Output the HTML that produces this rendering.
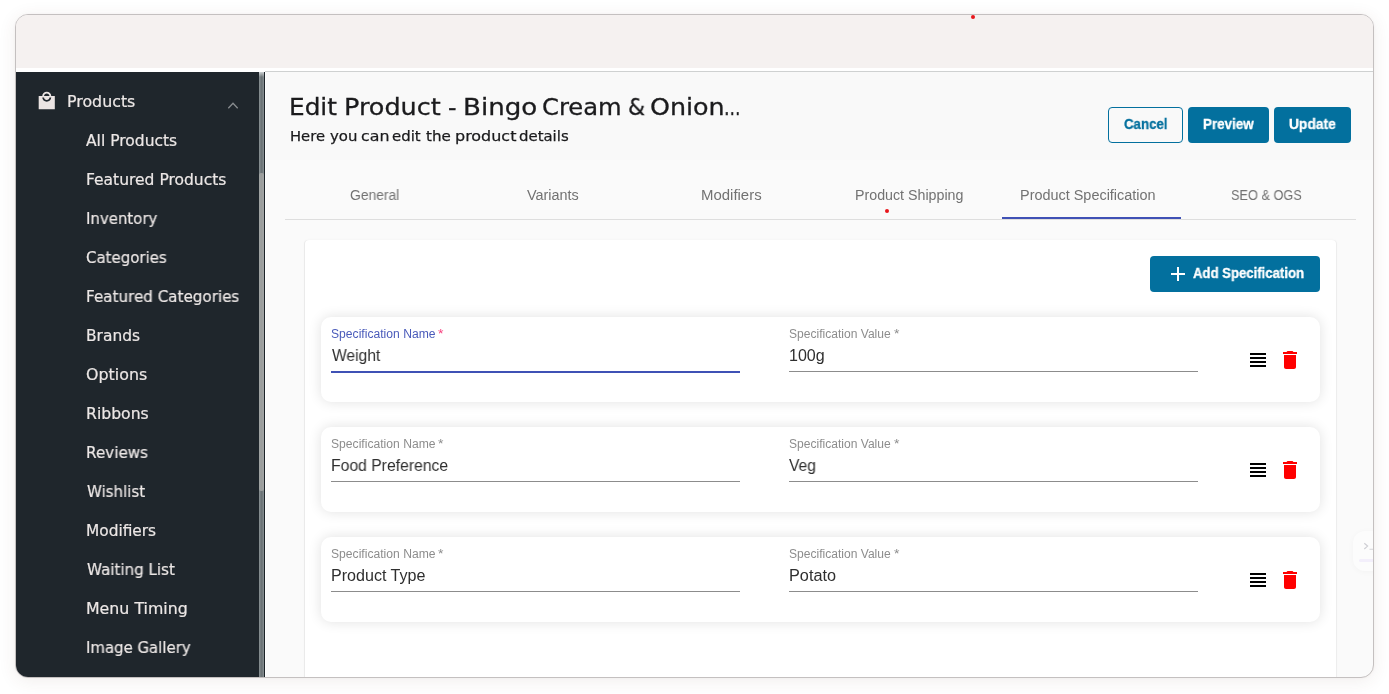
<!DOCTYPE html>
<html lang="en">
<head>
<meta charset="utf-8">
<title>Edit Product - Bingo Cream &amp; Onion</title>
<style>
html,body{margin:0;padding:0;background:#fff;}
body{width:1389px;height:694px;position:relative;overflow:hidden;font-family:"Liberation Sans",sans-serif;}
.frame{position:absolute;left:15px;top:14px;width:1357px;height:662px;border:1px solid #c4c0c0;border-radius:13px;
  box-shadow:0 3px 18px rgba(90,60,50,.085),0 0 3px rgba(90,60,50,.04);overflow:hidden;background:#fafafa;}
/* coordinates inside .inner are page coordinates */
.inner{position:absolute;left:-16px;top:-15px;width:1389px;height:694px;}
.abs{position:absolute;}
.topbar{left:0;top:0;width:1389px;height:68px;background:#f5f1f0;}
.strip{left:0;top:68px;width:1389px;height:4px;background:#fff;}
.mainline{left:265px;top:71px;width:1124px;height:1px;background:#cfd1d1;}
.side{left:0;top:72px;width:259px;height:622px;background:#1f262c;}
.sbtrack{left:259px;top:72px;width:5px;height:622px;background:linear-gradient(90deg,#8a9295 0,#6c7477 45%,#6c7477 60%,#8a9295 100%);}
.sbthumb{left:259px;top:173px;width:5px;height:318px;background:linear-gradient(90deg,#9fa3a3 0,#9b9d9c 50%,#a3a6a6 100%);border-radius:2px 2px 2px 2px;}
.sbedge{left:264px;top:72px;width:1px;height:622px;background:#1c2328;}
.mainedge{left:265px;top:72px;width:1px;height:622px;background:#fff;}
.mont{font-family:"DejaVu Sans","Liberation Sans",sans-serif;}
.nav{-webkit-text-stroke:.2px #ece7e6;color:#ece7e6;font-size:15px;line-height:20px;white-space:nowrap;letter-spacing:.05px;}
.title{left:290px;top:92px;font-size:23px;line-height:30px;color:#1d1d1f;letter-spacing:.5px;-webkit-text-stroke:.3px #1d1d1f;white-space:nowrap;}
.subtitle{left:290px;top:126px;font-size:14px;line-height:20px;color:#1d1d1f;white-space:nowrap;letter-spacing:.58px;-webkit-text-stroke:.2px #1d1d1f;}
.btn{box-sizing:border-box;height:36px;top:107px;border-radius:4px;font-weight:700;font-size:14px;line-height:36px;text-align:center;letter-spacing:-.45px;white-space:nowrap;}
.btn.fill{background:#03709e;color:#fff;}
.btn.line{background:transparent;border:1px solid #03709e;color:#03709e;line-height:34px;}
.tab{top:171px;width:178.5px;height:48px;line-height:48px;text-align:center;font-size:14px;color:#6b6b6b;white-space:nowrap;letter-spacing:.12px;}
.tabline{left:285px;top:219px;width:1071px;height:1px;background:#dedede;}
.ink{left:1002px;top:217px;width:179px;height:2px;background:#3f51b5;}
.card{left:305px;top:240px;width:1031px;height:460px;background:#fff;border-radius:4px 4px 0 0;box-shadow:-1px 0 0 rgba(0,0,0,.05),1px 0 0 rgba(0,0,0,.04),0 0 3px rgba(0,0,0,.04);}
.row{left:321px;width:999px;height:85px;background:#fff;border-radius:10px;box-shadow:0 0 13px rgba(0,0,0,.12);}
.lbl{font-size:12px;line-height:14px;color:#8a8a8a;white-space:nowrap;}
.lbl.act{color:#3f51b5;}
.lbl .req{color:#f4437c;}
.val{font-size:16px;line-height:20px;color:#333;white-space:nowrap;letter-spacing:-.1px;}
.ul{height:1px;background:#8c8c8c;width:409px;}
.ul.act{height:2px;background:#3f51b5;}
.dot{width:4px;height:4px;border-radius:50%;background:#e8161b;}
svg{display:block;}
h1,p,nav,section{margin:0;padding:0;font:inherit;display:block;}
.dj{font-family:"DejaVu Sans","Liberation Sans",sans-serif;}
.lb{font-family:"Liberation Sans",sans-serif;}
.t{display:block;position:absolute;white-space:nowrap;line-height:20px;transform-origin:0 50%;will-change:transform;}
</style>
</head>
<body>
<div class="frame"><div class="inner">
  <div class="abs topbar"></div>
  <div class="abs strip"></div>
  <div class="abs mainline"></div>

  <div class="abs" style="left:265px;top:72px;width:1124px;height:88px;background:#f9f9f9"></div>
  <!-- sidebar -->
  <div class="abs side"></div>
  <div class="abs sbtrack"></div>
  <div class="abs" style="left:259px;top:72px;width:5px;height:5px;background:linear-gradient(180deg,rgba(215,219,220,.9),rgba(215,219,220,0))"></div>
  <div class="abs sbthumb"></div>
  <div class="abs sbedge"></div>
  <div class="abs mainedge"></div>

  <svg class="abs" style="left:36.300px;top:91.350px" width="21.500" height="19.800" viewBox="0 0 24 24" preserveAspectRatio="none"><path fill="#ebe4e3" fill-rule="evenodd" d="M3.300 6H7c0-2.760 2.240-5 5-5s5 2.240 5 5h3.700c.200 0 .300.100.300.300V21.700c0 .200-.100.300-.300.300H3.300c-.200 0-.300-.100-.300-.300V6.300c0-.200.100-.300.300-.300zM12 3c1.660 0 3 1.340 3 3H9c0-1.660 1.340-3 3-3zm0 10c-2.760 0-5-2.240-5-5h2c0 1.660 1.340 3 3 3s3-1.340 3-3h2c0 2.760-2.240 5-5 5z"/></svg>
  <svg class="abs" style="left:226px;top:100px" width="14" height="10" viewBox="0 0 14 10"><path d="M2.300 8.300 L7 3.300 L11.700 8.300" fill="none" stroke="#878b8e" stroke-width="1.300"/></svg>


  <!-- header -->
  <div class="abs btn line" style="left:1108px;width:75px"></div>
  <div class="abs btn fill" style="left:1188px;width:81px"></div>
  <div class="abs btn fill" style="left:1274px;width:77px"></div>

  <!-- tabs -->
  <div class="abs tabline"></div>
  <div class="abs ink"></div>

  <!-- card -->
  <div class="abs card"></div>
  <div class="abs btn fill" style="left:1150px;top:256px;width:170px;"></div>

  <!-- row 1 -->
  <div class="abs row" style="top:317px"></div>
  <div class="abs ul act" style="left:331px;top:371px"></div>
  <div class="abs ul" style="left:789px;top:371px"></div>
  <svg class="abs" style="left:1246px;top:348px" width="24" height="24" viewBox="0 0 24 24"><path fill="#000" d="M4 15h16v-2H4v2zm0 4h16v-2H4v2zm0-8h16V9H4v2zm0-6v2h16V5H4z"/></svg>
  <svg class="abs" style="left:1278px;top:348px" width="24" height="24" viewBox="0 0 24 24"><path fill="#ff0000" d="M6 19c0 1.100.900 2 2 2h8c1.100 0 2-.900 2-2V7H6v12zM19 4h-3.500l-1-1h-5l-1 1H5v2h14V4z"/></svg>

  <!-- row 2 -->
  <div class="abs row" style="top:427px"></div>
  <div class="abs ul" style="left:331px;top:481px"></div>
  <div class="abs ul" style="left:789px;top:481px"></div>
  <svg class="abs" style="left:1246px;top:458px" width="24" height="24" viewBox="0 0 24 24"><path fill="#000" d="M4 15h16v-2H4v2zm0 4h16v-2H4v2zm0-8h16V9H4v2zm0-6v2h16V5H4z"/></svg>
  <svg class="abs" style="left:1278px;top:458px" width="24" height="24" viewBox="0 0 24 24"><path fill="#ff0000" d="M6 19c0 1.100.900 2 2 2h8c1.100 0 2-.900 2-2V7H6v12zM19 4h-3.500l-1-1h-5l-1 1H5v2h14V4z"/></svg>

  <!-- row 3 -->
  <div class="abs row" style="top:537px"></div>
  <div class="abs ul" style="left:331px;top:591px"></div>
  <div class="abs ul" style="left:789px;top:591px"></div>
  <svg class="abs" style="left:1246px;top:568px" width="24" height="24" viewBox="0 0 24 24"><path fill="#000" d="M4 15h16v-2H4v2zm0 4h16v-2H4v2zm0-8h16V9H4v2zm0-6v2h16V5H4z"/></svg>
  <svg class="abs" style="left:1278px;top:568px" width="24" height="24" viewBox="0 0 24 24"><path fill="#ff0000" d="M6 19c0 1.100.900 2 2 2h8c1.100 0 2-.900 2-2V7H6v12zM19 4h-3.500l-1-1h-5l-1 1H5v2h14V4z"/></svg>

  <svg class="abs" style="left:1166px;top:262px" width="24" height="24" viewBox="0 0 24 24"><path fill="#fff" d="M19 13h-6v6h-2v-6H5v-2h6V5h2v6h6v2z"/></svg>
  <div class="abs" style="left:1353px;top:531px;width:30px;height:40px;background:#fcfcfc;border-radius:12px 0 0 12px;box-shadow:0 1px 6px rgba(0,0,0,.03)"></div>
  <svg class="abs" style="left:1362px;top:540px" width="12" height="12" viewBox="0 0 12 12"><path d="M2.300 3.200 L5.600 6.100 L2.300 9" fill="none" stroke="#cfcfd4" stroke-width="1.200"/><path d="M7.500 9.200 H12" fill="none" stroke="#d4d4d8" stroke-width="1.100"/></svg>
  <div class="abs" style="left:1359px;top:559px;width:15px;height:3px;background:#f3effb;border-radius:2px 0 0 2px"></div>
  <nav>
    <span class="t dj" style="left:67.28px;top:92.20px;font-size:15.5px;color:#ece7e6;transform:scaleX(1.0215);-webkit-text-stroke:.2px #ece7e6">Products</span>
    <span class="t dj" style="left:86.10px;top:131.45px;font-size:15.3px;color:#ece7e6;transform:scaleX(1.0146);-webkit-text-stroke:.2px #ece7e6">All Products</span>
    <span class="t dj" style="left:85.79px;top:170.45px;font-size:15.3px;color:#ece7e6;transform:scaleX(1.0139);-webkit-text-stroke:.2px #ece7e6">Featured Products</span>
    <span class="t dj" style="left:85.82px;top:209.45px;font-size:15.3px;color:#ece7e6;transform:scaleX(0.9764);-webkit-text-stroke:.2px #ece7e6">Inventory</span>
    <span class="t dj" style="left:85.82px;top:248.45px;font-size:15.3px;color:#ece7e6;transform:scaleX(0.9790);-webkit-text-stroke:.2px #ece7e6">Categories</span>
    <span class="t dj" style="left:85.81px;top:287.45px;font-size:15.3px;color:#ece7e6;transform:scaleX(0.9902);-webkit-text-stroke:.2px #ece7e6">Featured Categories</span>
    <span class="t dj" style="left:85.79px;top:326.45px;font-size:15.3px;color:#ece7e6;transform:scaleX(1.0096);-webkit-text-stroke:.2px #ece7e6">Brands</span>
    <span class="t dj" style="left:85.76px;top:365.45px;font-size:15.3px;color:#ece7e6;transform:scaleX(1.0368);-webkit-text-stroke:.2px #ece7e6">Options</span>
    <span class="t dj" style="left:85.78px;top:404.45px;font-size:15.3px;color:#ece7e6;transform:scaleX(1.0233);-webkit-text-stroke:.2px #ece7e6">Ribbons</span>
    <span class="t dj" style="left:85.81px;top:443.45px;font-size:15.3px;color:#ece7e6;transform:scaleX(0.9918);-webkit-text-stroke:.2px #ece7e6">Reviews</span>
    <span class="t dj" style="left:86.80px;top:482.45px;font-size:15.3px;color:#ece7e6;transform:scaleX(0.9814);-webkit-text-stroke:.2px #ece7e6">Wishlist</span>
    <span class="t dj" style="left:85.80px;top:521.45px;font-size:15.3px;color:#ece7e6;transform:scaleX(1.0044);-webkit-text-stroke:.2px #ece7e6">Modifiers</span>
    <span class="t dj" style="left:86.80px;top:560.45px;font-size:15.3px;color:#ece7e6;transform:scaleX(0.9876);-webkit-text-stroke:.2px #ece7e6">Waiting List</span>
    <span class="t dj" style="left:85.77px;top:599.45px;font-size:15.3px;color:#ece7e6;transform:scaleX(1.0323);-webkit-text-stroke:.2px #ece7e6">Menu Timing</span>
    <span class="t dj" style="left:85.82px;top:638.45px;font-size:15.3px;color:#ece7e6;transform:scaleX(0.9755);-webkit-text-stroke:.2px #ece7e6">Image Gallery</span>
  </nav>
  <h1>
    <span class="t dj" style="left:289.45px;top:97.00px;font-size:23px;color:#1b1b1d;transform:scaleX(1.0762);-webkit-text-stroke:.3px #1b1b1d">Edit</span>
    <span class="t dj" style="left:344.08px;top:97.00px;font-size:23px;color:#1b1b1d;transform:scaleX(1.1082);-webkit-text-stroke:.3px #1b1b1d">Product</span>
    <span class="t dj" style="left:447.77px;top:97.00px;font-size:23px;color:#1b1b1d;transform:scaleX(1.0286);-webkit-text-stroke:.3px #1b1b1d">-</span>
    <span class="t dj" style="left:462.73px;top:97.00px;font-size:23px;color:#1b1b1d;transform:scaleX(1.1355);-webkit-text-stroke:.3px #1b1b1d">Bingo</span>
    <span class="t dj" style="left:541.55px;top:97.00px;font-size:23px;color:#1b1b1d;transform:scaleX(1.0534);-webkit-text-stroke:.3px #1b1b1d">Cream</span>
    <span class="t dj" style="left:628.05px;top:97.00px;font-size:23px;color:#1b1b1d;transform:scaleX(0.9500);-webkit-text-stroke:.3px #1b1b1d">&amp;</span>
    <span class="t dj" style="left:650.40px;top:97.00px;font-size:23px;color:#1b1b1d;transform:scaleX(1.1031);-webkit-text-stroke:.3px #1b1b1d">Onion</span>
    <span class="t dj" style="left:724.49px;top:97.00px;font-size:23px;color:#1b1b1d;transform:scaleX(0.7556);-webkit-text-stroke:.3px #1b1b1d">...</span>
  </h1>
  <p>
    <span class="t dj" style="left:290.18px;top:126.00px;font-size:14.4px;color:#1b1b1d;transform:scaleX(1.0242);-webkit-text-stroke:.25px #1b1b1d">Here</span>
    <span class="t dj" style="left:330.30px;top:126.00px;font-size:14.4px;color:#1b1b1d;transform:scaleX(1.0360);-webkit-text-stroke:.25px #1b1b1d">you</span>
    <span class="t dj" style="left:360.80px;top:126.00px;font-size:14.4px;color:#1b1b1d;transform:scaleX(1.1000);-webkit-text-stroke:.25px #1b1b1d">can</span>
    <span class="t dj" style="left:392.46px;top:126.00px;font-size:14.4px;color:#1b1b1d;transform:scaleX(1.0370);-webkit-text-stroke:.25px #1b1b1d">edit</span>
    <span class="t dj" style="left:426.30px;top:126.00px;font-size:14.4px;color:#1b1b1d;transform:scaleX(1.0522);-webkit-text-stroke:.25px #1b1b1d">the</span>
    <span class="t dj" style="left:454.89px;top:126.00px;font-size:14.4px;color:#1b1b1d;transform:scaleX(1.1093);-webkit-text-stroke:.25px #1b1b1d">product</span>
    <span class="t dj" style="left:519.16px;top:126.00px;font-size:14.4px;color:#1b1b1d;transform:scaleX(1.0362);-webkit-text-stroke:.25px #1b1b1d">details</span>
  </p>
  <div class="actions">
    <span class="t lb" style="left:1124.00px;top:114.00px;font-size:14px;color:#04709e;transform:scaleX(0.9467);font-weight:700;-webkit-text-stroke:.3px #04709e">Cancel</span>
    <span class="t lb" style="left:1203.14px;top:114.00px;font-size:14px;color:#fff;transform:scaleX(0.9577);font-weight:700;-webkit-text-stroke:.3px #fff">Preview</span>
    <span class="t lb" style="left:1289.22px;top:114.00px;font-size:14px;color:#fff;transform:scaleX(0.9848);font-weight:700;-webkit-text-stroke:.3px #fff">Update</span>
  </div>
  <div class="add">
    <span class="t lb" style="left:1193.30px;top:263.40px;font-size:14px;color:#fff;transform:scaleX(0.9390);font-weight:700;-webkit-text-stroke:.3px #fff">Add Specification</span>
  </div>
  <div class="tabs">
    <span class="t lb" style="left:349.71px;top:185.20px;font-size:14px;color:#727272;transform:scaleX(0.9875)">General</span>
    <span class="t lb" style="left:527.00px;top:185.20px;font-size:14px;color:#727272;transform:scaleX(1.0280)">Variants</span>
    <span class="t lb" style="left:700.73px;top:185.20px;font-size:14px;color:#727272;transform:scaleX(1.0673)">Modifiers</span>
    <span class="t lb" style="left:855.18px;top:185.20px;font-size:14px;color:#727272;transform:scaleX(1.0171)">Product Shipping</span>
    <span class="t lb" style="left:1020.07px;top:185.20px;font-size:14px;color:#727272;transform:scaleX(1.0308)">Product Specification</span>
    <span class="t lb" style="left:1231.29px;top:185.20px;font-size:14px;color:#727272;transform:scaleX(0.9092)">SEO &amp; OGS</span>
  </div>
  <section id="spec1">
    <span class="t lb" style="left:330.79px;top:323.90px;font-size:12px;color:#4a5bba;transform:scaleX(1.0108)">Specification Name</span>
    <span class="t lb" style="left:437.73px;top:323.90px;font-size:12px;color:#f7417f;transform:scaleX(1.1667)">*</span>
    <span class="t lb" style="left:788.89px;top:323.90px;font-size:12px;color:#8d8d8d;transform:scaleX(1.0050)">Specification Value</span>
    <span class="t lb" style="left:894.13px;top:323.90px;font-size:12px;color:#8d8d8d;transform:scaleX(1.1667)">*</span>
    <span class="t lb" style="left:331.55px;top:345.80px;font-size:16px;color:#2f2f2f;transform:scaleX(0.9745)">Weight</span>
    <span class="t lb" style="left:788.80px;top:345.80px;font-size:16px;color:#2f2f2f;transform:scaleX(1.0029)">100g</span>
  </section>
  <section id="spec2">
    <span class="t lb" style="left:330.79px;top:433.90px;font-size:12px;color:#8d8d8d;transform:scaleX(1.0108)">Specification Name</span>
    <span class="t lb" style="left:437.73px;top:433.90px;font-size:12px;color:#8d8d8d;transform:scaleX(1.1667)">*</span>
    <span class="t lb" style="left:788.89px;top:433.90px;font-size:12px;color:#8d8d8d;transform:scaleX(1.0050)">Specification Value</span>
    <span class="t lb" style="left:894.13px;top:433.90px;font-size:12px;color:#8d8d8d;transform:scaleX(1.1667)">*</span>
    <span class="t lb" style="left:330.87px;top:455.80px;font-size:16px;color:#2f2f2f;transform:scaleX(0.9826)">Food Preference</span>
    <span class="t lb" style="left:788.80px;top:455.80px;font-size:16px;color:#2f2f2f;transform:scaleX(0.9741)">Veg</span>
  </section>
  <section id="spec3">
    <span class="t lb" style="left:330.79px;top:543.90px;font-size:12px;color:#8d8d8d;transform:scaleX(1.0108)">Specification Name</span>
    <span class="t lb" style="left:437.73px;top:543.90px;font-size:12px;color:#8d8d8d;transform:scaleX(1.1667)">*</span>
    <span class="t lb" style="left:788.89px;top:543.90px;font-size:12px;color:#8d8d8d;transform:scaleX(1.0050)">Specification Value</span>
    <span class="t lb" style="left:894.13px;top:543.90px;font-size:12px;color:#8d8d8d;transform:scaleX(1.1667)">*</span>
    <span class="t lb" style="left:330.85px;top:565.80px;font-size:16px;color:#2f2f2f;transform:scaleX(1.0049)">Product Type</span>
    <span class="t lb" style="left:788.58px;top:565.80px;font-size:16px;color:#2f2f2f;transform:scaleX(1.0156)">Potato</span>
  </section>
  <div class="abs dot" style="left:970.5px;top:15px"></div>
  <div class="abs dot" style="left:885px;top:208.5px"></div>
</div></div>
</body>
</html>
